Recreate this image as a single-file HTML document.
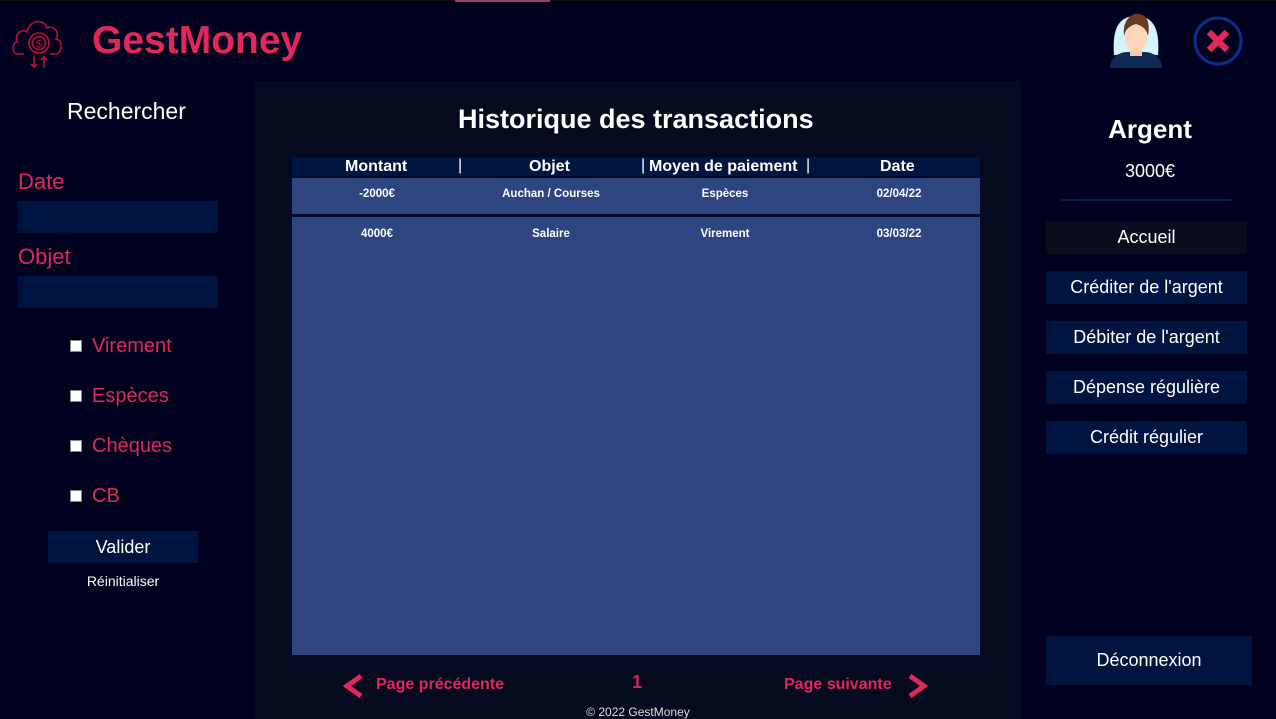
<!DOCTYPE html>
<html><head><meta charset="utf-8"><style>
*{margin:0;padding:0;box-sizing:border-box}
body{width:1276px;height:719px;background:#00011e;font-family:"Liberation Sans",sans-serif;position:relative;overflow:hidden;color:#fff}
.a{position:absolute}
.red{color:#e0285a}
.inp{background:#001440;width:200px;height:32px;left:18px}
.cb{width:12px;height:12px;background:#fff;border:1px solid #888;left:70px}
.lab{left:92px;font-size:20px;color:#e0285a}
.btn{background:#001440;width:201px;height:33px;left:1046px;font-size:18px;text-align:center;line-height:33px}
.cell{position:absolute;font-size:11.5px;font-weight:bold;text-align:center;width:170px}
</style></head><body>
<div class="a" style="left:0;top:0;width:1276px;height:1px;background:#111"></div>
<div class="a" style="left:455px;top:0;width:95px;height:2px;background:#a04060"></div>
<svg class="a" style="left:10px;top:12px" width="60" height="60" viewBox="0 0 60 60" fill="none" stroke="#c01030" stroke-width="1.6">
<path d="M14 42 H8 C2 42 1 32 7 30 C4 22 12 16 17 20 C19 8 34 6 37 16 C44 13 50 20 46 27 C53 28 53 40 46 42 H40"/>
<circle cx="29" cy="31" r="10"/><circle cx="29" cy="31" r="6.5"/>
<text x="29" y="35.5" font-size="11" fill="#c01030" stroke="none" text-anchor="middle" font-family="Liberation Sans">$</text>
<path d="M24 44 V55 M21 52 L24 55 L27 52 M34 56 V45 M31 48 L34 45 L37 48"/>
</svg>
<div class="a red" style="left:92px;top:19px;font-size:39px;font-weight:bold">GestMoney</div>
<svg class="a" style="left:1108px;top:10px" width="56" height="58" viewBox="0 0 56 58">
<path d="M6 45 C4 20 10 6 28 6 C46 6 52 20 50 45 Z" fill="#d6f4fc"/>
<path d="M2 58 C2 48 10 42 20 42 H36 C46 42 54 48 54 58 Z" fill="#0f2a55"/>
<rect x="22" y="36" width="12" height="10" fill="#f4c7a4"/>
<ellipse cx="28" cy="28" rx="11" ry="14" fill="#fdd7b8"/>
<path d="M16 26 C14 10 24 2 32 4 C40 6 42 14 40 26 C38 18 34 16 28 14 C22 16 18 18 16 26Z" fill="#6a3a22"/>
</svg>
<svg class="a" style="left:1193px;top:16px" width="50" height="50" viewBox="0 0 50 50">
<circle cx="25" cy="25" r="23" fill="none" stroke="#0a2e8a" stroke-width="3"/>
<path d="M16 16 L34 34 M34 16 L16 34" stroke="#e0285a" stroke-width="6.5"/>
</svg>

<div class="a" style="left:67px;top:98px;font-size:23px">Rechercher</div>
<div class="a red" style="left:18px;top:169px;font-size:22px">Date</div>
<div class="a inp" style="top:201px"></div>
<div class="a red" style="left:18px;top:244px;font-size:22px">Objet</div>
<div class="a inp" style="top:276px"></div>
<div class="a cb" style="top:340px"></div><div class="a lab" style="top:335px">Virement</div>
<div class="a cb" style="top:390px"></div><div class="a lab" style="top:385px">Espèces</div>
<div class="a cb" style="top:440px"></div><div class="a lab" style="top:435px">Chèques</div>
<div class="a cb" style="top:490px"></div><div class="a lab" style="top:485px">CB</div>
<div class="a" style="left:48px;top:531px;width:150px;height:32px;background:#001440;text-align:center;line-height:32px;font-size:18px">Valider</div>
<div class="a" style="left:48px;top:573px;width:150px;text-align:center;font-size:14px">Réinitialiser</div>

<div class="a" style="left:255px;top:81px;width:766px;height:638px;background:#060a1e"></div>
<div class="a" style="left:458px;top:104px;font-size:27px;font-weight:bold">Historique des transactions</div>
<div class="a" style="left:290px;top:155px;width:692px;height:502px;background:#000a28"></div>
<div class="a" style="left:292px;top:157px;width:688px;height:19px;background:#001440"></div>
<div class="a" style="left:292px;top:178px;width:688px;height:36px;background:#2e4580"></div>
<div class="a" style="left:292px;top:217px;width:688px;height:438px;background:#2e4580"></div>
<div class="a" style="top:158px;left:292px;width:688px;font-size:16px;font-weight:bold;height:19px">
<span class="a" style="left:53px;top:0">Montant</span>
<span class="a" style="left:166px;top:-1px;font-weight:normal">|</span>
<span class="a" style="left:237px;top:0">Objet</span>
<span class="a" style="left:349px;top:-1px;font-weight:normal">|</span>
<span class="a" style="left:357px;top:0">Moyen de paiement</span>
<span class="a" style="left:514px;top:-1px;font-weight:normal">|</span>
<span class="a" style="left:588px;top:0">Date</span>
</div>
<div class="cell" style="left:292px;top:188px">-2000€</div>
<div class="cell" style="left:466px;top:188px">Auchan / Courses</div>
<div class="cell" style="left:640px;top:188px">Espèces</div>
<div class="cell" style="left:814px;top:188px">02/04/22</div>
<div class="cell" style="left:292px;top:228px">4000€</div>
<div class="cell" style="left:466px;top:228px">Salaire</div>
<div class="cell" style="left:640px;top:228px">Virement</div>
<div class="cell" style="left:814px;top:228px">03/03/22</div>

<svg class="a" style="left:342px;top:674px" width="22" height="24"><path d="M19 2 L5 12 L19 22" stroke="#e0285a" stroke-width="5" fill="none"/></svg>
<div class="a red" style="left:376px;top:676px;font-size:16px;font-weight:bold">Page précédente</div>
<div class="a red" style="left:632px;top:672px;font-size:18px;font-weight:bold;color:#c8285a">1</div>
<div class="a red" style="left:784px;top:676px;font-size:16px;font-weight:bold">Page suivante</div>
<svg class="a" style="left:907px;top:674px" width="22" height="24"><path d="M3 2 L17 12 L3 22" stroke="#e0285a" stroke-width="5" fill="none"/></svg>
<div class="a" style="left:255px;top:705px;width:766px;text-align:center;font-size:12px;color:#ddd">© 2022 GestMoney</div>

<div class="a" style="left:1046px;top:114px;width:208px;text-align:center;font-size:26px;font-weight:bold">Argent</div>
<div class="a" style="left:1046px;top:161px;width:208px;text-align:center;font-size:18px">3000€</div>
<div class="a" style="left:1061px;top:199px;width:170px;height:2px;background:#0a1e4a"></div>
<div class="a btn" style="top:221px;background:#0a0d1c">Accueil</div>
<div class="a btn" style="top:271px">Créditer de l'argent</div>
<div class="a btn" style="top:321px">Débiter de l'argent</div>
<div class="a btn" style="top:371px">Dépense régulière</div>
<div class="a btn" style="top:421px">Crédit régulier</div>
<div class="a" style="left:1046px;top:636px;width:206px;height:49px;background:#001440;text-align:center;line-height:49px;font-size:18px">Déconnexion</div>
</body></html>
